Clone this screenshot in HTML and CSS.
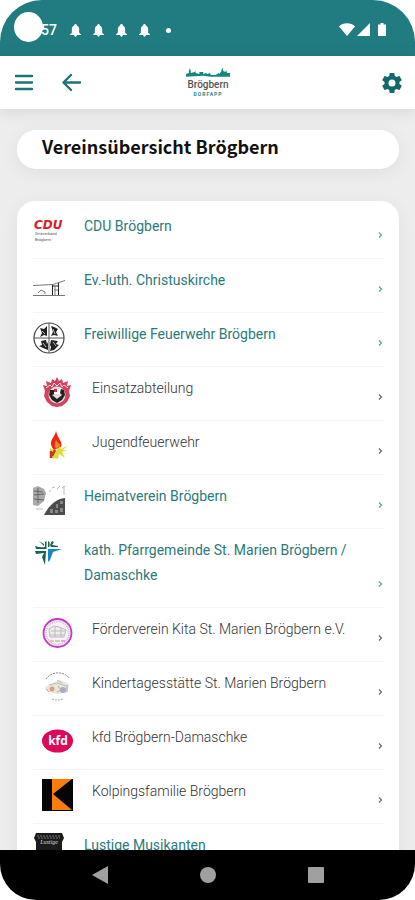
FILE: index.html
```html
<!DOCTYPE html>
<html lang="de">
<head>
<meta charset="utf-8">
<meta name="viewport" content="width=device-width, initial-scale=1">
<title>Vereinsübersicht Brögbern</title>
<link rel="stylesheet" href="styles.css">
</head>
<body>
<div class="phone">
  <div class="status">
    <span class="time">57</span>
    <span class="camera"></span>
    <div class="notices">
      <svg viewBox="0 0 12 14"><path d="M6 0c1 0 1.400.7 1.400 1.500C9.400 2.200 10 4 10 6v3.500l2 1.800v.7H0v-.7l2-1.800V6c0-2 .6-3.800 2.600-4.500C4.600.7 5 0 6 0zM4.500 12h3c-.3 2.300-2.700 2.300-3 0z"/></svg>
      <svg viewBox="0 0 12 14"><path d="M6 0c1 0 1.400.7 1.400 1.500C9.400 2.200 10 4 10 6v3.500l2 1.800v.7H0v-.7l2-1.800V6c0-2 .6-3.800 2.600-4.500C4.600.7 5 0 6 0zM4.500 12h3c-.3 2.300-2.700 2.300-3 0z"/></svg>
      <svg viewBox="0 0 12 14"><path d="M6 0c1 0 1.400.7 1.400 1.500C9.400 2.200 10 4 10 6v3.500l2 1.800v.7H0v-.7l2-1.800V6c0-2 .6-3.800 2.600-4.500C4.600.7 5 0 6 0zM4.500 12h3c-.3 2.300-2.700 2.300-3 0z"/></svg>
      <svg viewBox="0 0 12 14"><path d="M6 0c1 0 1.400.7 1.400 1.500C9.400 2.200 10 4 10 6v3.500l2 1.800v.7H0v-.7l2-1.800V6c0-2 .6-3.800 2.600-4.500C4.600.7 5 0 6 0zM4.500 12h3c-.3 2.300-2.700 2.300-3 0z"/></svg>
      <span class="dot"></span>
    </div>
    <svg class="signals" viewBox="0 0 48 16"><path d="M0 4.500C4 .3 12 .3 16 4.500L8 14zM31 1v13H18zM39 2.500h2.500V1h3v1.500H47V14h-8z"/></svg>
  </div>

  <header class="topbar">
    <button class="tool" type="button" aria-label="Menü"><svg viewBox="0 0 20 20"><path d="M2 3h16M2 9.500h16M2 16h16"/></svg></button>
    <button class="tool" type="button" aria-label="Zurück"><svg viewBox="0 0 20 20"><path d="M18 9.500H2M9 2L1.500 9.500 9 17"/></svg></button>
    <a class="logo" href="#" aria-label="Brögbern Dorfapp">
      <svg viewBox="0 0 46 10"><path d="M0 9V6l3-1V3l1-3 1 3v2l4-1 1-1v2l4 1V4h4v2l3-1 1 1 3-1 1 2 5 0 3-2 1 1 2-3 1-4 1 4 2 1 1-2 1 3h3v4H26l-8-1z"/></svg>
      <span class="logo-name">Brögbern</span>
      <span class="logo-sub">DORFAPP</span>
    </a>
    <button class="tool gear" type="button" aria-label="Einstellungen"><svg viewBox="2 2 20 20"><path d="M19.400 13c.1-.7.1-1.300 0-2l2.100-1.600c.2-.2.200-.4.100-.6l-2-3.500c-.1-.2-.4-.3-.6-.2l-2.500 1c-.5-.4-1.100-.7-1.700-1L14.400 2.400c0-.2-.2-.4-.4-.4h-4c-.2 0-.4.200-.4.400L9.200 5.100c-.6.300-1.200.6-1.700 1L5 5.100c-.2-.1-.5 0-.6.2l-2 3.500c-.1.200-.1.400.1.600L4.600 11c-.1.700-.1 1.300 0 2l-2.100 1.600c-.2.200-.2.400-.1.600l2 3.500c.1.200.4.300.6.200l2.500-1c.5.400 1.100.7 1.700 1l.4 2.700c0 .2.200.4.400.4h4c.2 0 .4-.2.400-.4l.4-2.700c.6-.3 1.200-.6 1.700-1l2.500 1c.2.100.5 0 .6-.2l2-3.500c.1-.2.100-.4-.1-.6zM12 15.500a3.500 3.500 0 1 1 0-7 3.500 3.500 0 0 1 0 7z"/></svg></button>
  </header>

  <main class="content">
    <h1 class="title">Vereinsübersicht Brögbern</h1>
    <nav class="list">
      <a class="row" href="#">
        <svg class="badge" viewBox="0 0 32 32"><text class="cdu" x="1" y="15">CDU</text><text class="cdu-sub" x="2" y="21">Ortsverband</text><text class="cdu-sub" x="2" y="27">Brögbern</text></svg>
        <span class="label">CDU Brögbern</span><svg class="chev" viewBox="0 0 6 8"><path d="M1 1.500l2.500 2.500-2.500 2.500"/></svg>
      </a>
      <a class="row" href="#">
        <svg class="badge" viewBox="0 0 32 32"><g fill="none" stroke="#777"><path d="M0 17.500l20-1 12-4M0 27.500h32"/><path d="M19.500 17v10M25.500 15v12M19 18h7" stroke="#222"/><path d="M5 25l3-3 4 2v2M21 22h4M22 18v9"/></g></svg>
        <span class="label">Ev.-luth. Christuskirche</span><svg class="chev" viewBox="0 0 6 8"><path d="M1 1.500l2.500 2.500-2.500 2.500"/></svg>
      </a>
      <a class="row" href="#">
        <svg class="badge" viewBox="0 0 32 32"><circle cx="16" cy="16" r="15" fill="#fff" stroke="#444" stroke-width="1.200"/><path d="M7 6l4 1 3-3v10l-3-1-4 2 2-4zM18 4l3 1 4 2-2 3 2 4-4-1-3 1 2-4zM8 19l5-1 1 4 1-2v8l-5-2-4-2 3-1zM18 18l7 1-2 3 3 1-5 5-4 1 1-4-1-2z" fill="#222"/><path d="M1 16h30M16 1v30" stroke="#555"/><path d="M9 9l3 3M20 7l2 5M10 21l3 4M20 20l3 4" stroke="#bbb"/></svg>
        <span class="label">Freiwillige Feuerwehr Brögbern</span><svg class="chev" viewBox="0 0 6 8"><path d="M1 1.500l2.500 2.500-2.500 2.500"/></svg>
      </a>
      <a class="row sub" href="#">
        <svg class="badge" viewBox="0 0 32 32"><path d="M16 1l2 4 3-2 1 4 5-2-1 5 4-1-2 6 1 5-3 6-5 4-5 1-5-1-5-4-3-6 1-5-2-6 4 1-1-5 5 2 1-4 3 2z" fill="#d6405a"/><path d="M5 12l4-3 2 2 2-4 3 3 3-3 2 4 2-2 4 3" fill="none" stroke="#fbdde2"/><circle cx="16" cy="19" r="8.500" fill="#ddd"/><path d="M9 14h5v4l-3 1 5 4 5-4-2-2 1-4 3 1 1 5-3 5-5 3-5-3-3-5z" fill="#222"/><path d="M13 13h6v5h-6z" fill="#fff"/><path d="M13 13h3v3h-3z" fill="#d32c46"/></svg>
        <span class="label">Einsatzabteilung</span><svg class="chev" viewBox="0 0 6 8"><path d="M1 1.500l2.500 2.500-2.500 2.500"/></svg>
      </a>
      <a class="row sub" href="#">
        <svg class="badge" viewBox="0 0 32 32"><path d="M15 1c-1 5-5 8-5 12s3 7 3 7l7-3c2-5-3-8-5-16z" fill="#ed2616"/><path d="M15 10c-1 3-2 6 0 9l4-3c0-3-3-3-4-6z" fill="#f28c21"/><path d="M9 18l6 3 4-5 1 3 6-3-4 4h4l-5 2 3 6-6-4-1 5-8-1z" fill="#dedc3e"/><path d="M10 21v7M14 20l-3 6" stroke="#cf3324" stroke-width="2.500"/></svg>
        <span class="label">Jugendfeuerwehr</span><svg class="chev" viewBox="0 0 6 8"><path d="M1 1.500l2.500 2.500-2.500 2.500"/></svg>
      </a>
      <a class="row" href="#">
        <svg class="badge" viewBox="0 0 32 32"><path d="M0 4l5-2 6 3 2 4-2 8-6 5-5-1z" fill="#aaa"/><path d="M1 7l9 1M1 11l10-1M1 15l10 1M5 4v15" stroke="#666"/><path d="M11 31c4-8 11-16 21-17v17z" fill="#4c4c4c"/><path d="M17 25h3v4h-3zM23 20h2v4h-2zM27 24h3v4h-3zM27 17h3v3h-3zM22 26h3v3h-3z" fill="#888"/><path d="M19 4l3-1M24 5l3-3M29 4l3-2M16 7h2M3 25h7M31 2v9" stroke="#bbb"/></svg>
        <span class="label">Heimatverein Brögbern</span><svg class="chev" viewBox="0 0 6 8"><path d="M1 1.500l2.500 2.500-2.500 2.500"/></svg>
      </a>
      <a class="row" href="#">
        <svg class="badge" viewBox="0 0 32 32"><path d="M2 8q5 2 10 1V4l1.500-1v8H3zM6 3l5 3v2zM15 3l1.500 1v5h-1.500zM17 7l2-4 2 1-2 3 6 1v1h-7zM2 13h11l-1 14-3-8 2-4-8 1z" fill="#17604b"/><path d="M15 11h14l-9 3-3 8-2 2z" fill="#1786cd"/></svg>
        <span class="label">kath. Pfarrgemeinde St. Marien Brögbern / Damaschke</span><svg class="chev" viewBox="0 0 6 8"><path d="M1 1.500l2.500 2.500-2.500 2.500"/></svg>
      </a>
      <a class="row sub" href="#">
        <svg class="badge" viewBox="0 0 32 32"><circle cx="16.500" cy="16" r="14" fill="#f5f1f5" stroke="#cc34cb" stroke-width="1.800"/><circle cx="16.500" cy="16" r="11.500" fill="none" stroke="#cbb5cc" stroke-width="1.500" stroke-dasharray="1 1"/><path d="M8 12l5-3 5 1 7 3-2 7H9zM10 14h14M9 18h14M14 10v10M20 11v9" fill="#eee" stroke="#bcbcbc"/><path d="M9 24h4" stroke="#e99b53"/><path d="M14 24h5" stroke="#7bbd70"/><path d="M20 24h4" stroke="#d864a4"/></svg>
        <span class="label">Förderverein Kita St. Marien Brögbern e.V.</span><svg class="chev" viewBox="0 0 6 8"><path d="M1 1.500l2.500 2.500-2.500 2.500"/></svg>
      </a>
      <a class="row sub" href="#">
        <svg class="badge" viewBox="0 0 32 32"><path d="M5 8C10 0 23 0 28 7" fill="none" stroke="#888" stroke-dasharray="2 1"/><path d="M11 28q6 2 11 0" fill="none" stroke="#aaa" stroke-dasharray="2 1"/><path d="M4 16l8-4 7-3 9 4-2 9-10 1-10-3z" fill="#e8e5dd"/><path d="M8 14l8-2 9 3M16 9l5 3" fill="none" stroke="#bbb"/><circle cx="11" cy="18" r="2.500" fill="#e49a80"/><circle cx="22" cy="19" r="3" fill="#a9aac9"/><path d="M17 15l3 4-4 2M5 18l3 3M26 14v7" fill="none" stroke="#aaad98"/></svg>
        <span class="label">Kindertagesstätte St. Marien Brögbern</span><svg class="chev" viewBox="0 0 6 8"><path d="M1 1.500l2.500 2.500-2.500 2.500"/></svg>
      </a>
      <a class="row sub" href="#">
        <svg class="badge" viewBox="0 0 32 32"><ellipse cx="16.500" cy="16" rx="15.500" ry="11.500" fill="#dc0859"/><text class="kfd" x="17" y="20">kfd</text></svg>
        <span class="label">kfd Brögbern-Damaschke</span><svg class="chev" viewBox="0 0 6 8"><path d="M1 1.500l2.500 2.500-2.500 2.500"/></svg>
      </a>
      <a class="row sub" href="#">
        <svg class="badge" viewBox="0 0 32 32"><path d="M1 0h31v32H1z" fill="#050505"/><path d="M11 0h20L12 15l19 16H11z" fill="#fb7e0b"/></svg>
        <span class="label">Kolpingsfamilie Brögbern</span><svg class="chev" viewBox="0 0 6 8"><path d="M1 1.500l2.500 2.500-2.500 2.500"/></svg>
      </a>
      <a class="row" href="#">
        <svg class="badge" viewBox="0 0 32 32"><path d="M3 0h26l2 5-2 4v23H3V9L1 5z" fill="#1b1b1b"/><path d="M4 3h24M5 5h22" stroke="#777" stroke-dasharray="2 1"/><text class="band" x="16" y="11">Lustige</text></svg>
        <span class="label">Lustige Musikanten</span><svg class="chev" viewBox="0 0 6 8"><path d="M1 1.500l2.500 2.500-2.500 2.500"/></svg>
      </a>
    </nav>
  </main>

  <div class="sysnav">
    <button type="button" aria-label="Zurück"><svg viewBox="0 0 18 18"><path d="M17 0v18L1 9z"/></svg></button>
    <button type="button" aria-label="Startseite"><svg viewBox="0 0 18 18"><circle cx="9" cy="9" r="8"/></svg></button>
    <button type="button" aria-label="Übersicht"><svg viewBox="0 0 18 18"><rect x="1" y="1" width="16" height="16" rx="1"/></svg></button>
  </div>
</div>
</body>
</html>
```
FILE: styles.css
```css
* { box-sizing: border-box; }

body {
  margin: 0;
  background: #fff;
  font-family: Roboto, "Liberation Sans", sans-serif;
}

button {
  padding: 0;
  border: 0;
  background: none;
}

svg { display: block; }

.phone {
  display: flex;
  flex-direction: column;
  height: 100vh;
  overflow: hidden;
  border-radius: 42px 42px 36px 36px;
}

.status {
  position: relative;
  flex: none;
  display: flex;
  align-items: center;
  height: 56px;
  padding: 4px 28px 0 41px;
  background: #207c80;
  color: #fff;
}

.camera {
  position: absolute;
  top: 12px;
  left: 14px;
  width: 29px;
  height: 30px;
  border-radius: 50%;
  background: #fff;
}

.time {
  width: 29px;
  font-size: 14px;
  font-weight: 500;
}

.notices {
  display: flex;
  align-items: center;
  gap: 12px;
}

.notices svg {
  width: 11px;
  height: 13px;
  fill: #fff;
}

.dot {
  width: 5px;
  height: 5px;
  margin-left: 4px;
  border-radius: 50%;
  background: #fff;
}

.signals {
  width: 48px;
  height: 16px;
  margin-left: auto;
  fill: #fff;
}

.topbar {
  position: relative;
  z-index: 1;
  flex: none;
  display: grid;
  grid-template-columns: 20px 20px 1fr 20px 20px;
  column-gap: 28px;
  align-items: center;
  height: 53px;
  padding: 0 13px 0 14px;
  background: #fff;
  box-shadow: 0 2px 16px rgba(0, 0, 0, 0.1);
}

.tool {
  width: 20px;
  height: 20px;
}

.tool svg {
  width: 20px;
  height: 20px;
  fill: none;
  stroke: #1f7276;
  stroke-width: 2.4;
  stroke-linecap: round;
  stroke-linejoin: round;
}

.gear { grid-column: 5; }

.gear svg {
  fill: #14686c;
  stroke: none;
}

.logo {
  display: flex;
  flex-direction: column;
  align-items: center;
  color: #555;
  text-decoration: none;
}

.logo svg {
  width: 44px;
  height: 10px;
  fill: #17877e;
}

.logo-name {
  font-size: 10px;
  line-height: 13px;
  font-weight: 500;
}

.logo-sub {
  color: #27898c;
  font-size: 5px;
  line-height: 7px;
  font-weight: 700;
  letter-spacing: 1px;
}

.content {
  flex: 1;
  min-height: 0;
  overflow: hidden;
  padding: 21px 16px 0 17px;
  background: #ededed;
}

.title {
  margin: 0 0 32px;
  padding: 3px 25px 9px;
  border-radius: 19px;
  background: #fff;
  box-shadow: 0 4px 20px rgba(0, 0, 0, 0.06);
  color: #111;
  font: 700 18px/27px "Noto Sans CJK SC", "Noto Sans", sans-serif;
}

.list {
  padding: 4px 14px 0 16px;
  border-radius: 18px 18px 0 0;
  background: #fff;
  box-shadow: 0 4px 20px rgba(0, 0, 0, 0.06);
}

.row {
  display: flex;
  align-items: flex-start;
  padding: 9px 0 19px;
  border-bottom: 1px solid #f4f4f4;
  color: #2b7a7b;
  text-decoration: none;
}

.sub {
  padding-left: 8px;
  color: #333;
}

.badge {
  flex: none;
  width: 32px;
  height: 32px;
  margin: 0 19px -7px 0;
}

.label {
  flex: 1;
  padding-right: 12px;
  font-size: 14px;
  line-height: 25px;
}

.sub .label { font-weight: 300; }

.chev {
  flex: none;
  align-self: flex-end;
  width: 6px;
  height: 8px;
  margin-right: 1px;
  fill: none;
  stroke: #5aa596;
  stroke-width: 1.2;
}

.sub .chev { stroke: #666; }

.cdu {
  font: italic 700 12px "DejaVu Sans", sans-serif;
  fill: #e01a22;
}

.cdu-sub {
  font: 4px Roboto, sans-serif;
  fill: #555;
}

.kfd {
  font: 700 12px "Open Sans", sans-serif;
  fill: #fff;
  text-anchor: middle;
}

.band {
  font: italic 6px "Liberation Serif", serif;
  fill: #ddd;
  text-anchor: middle;
}

.sysnav {
  flex: none;
  display: grid;
  grid-template-columns: repeat(3, 18px);
  justify-content: center;
  align-items: center;
  column-gap: 90px;
  height: 50px;
  background: #000;
}

.sysnav svg {
  width: 18px;
  height: 18px;
  fill: #a0a0a0;
}
```
